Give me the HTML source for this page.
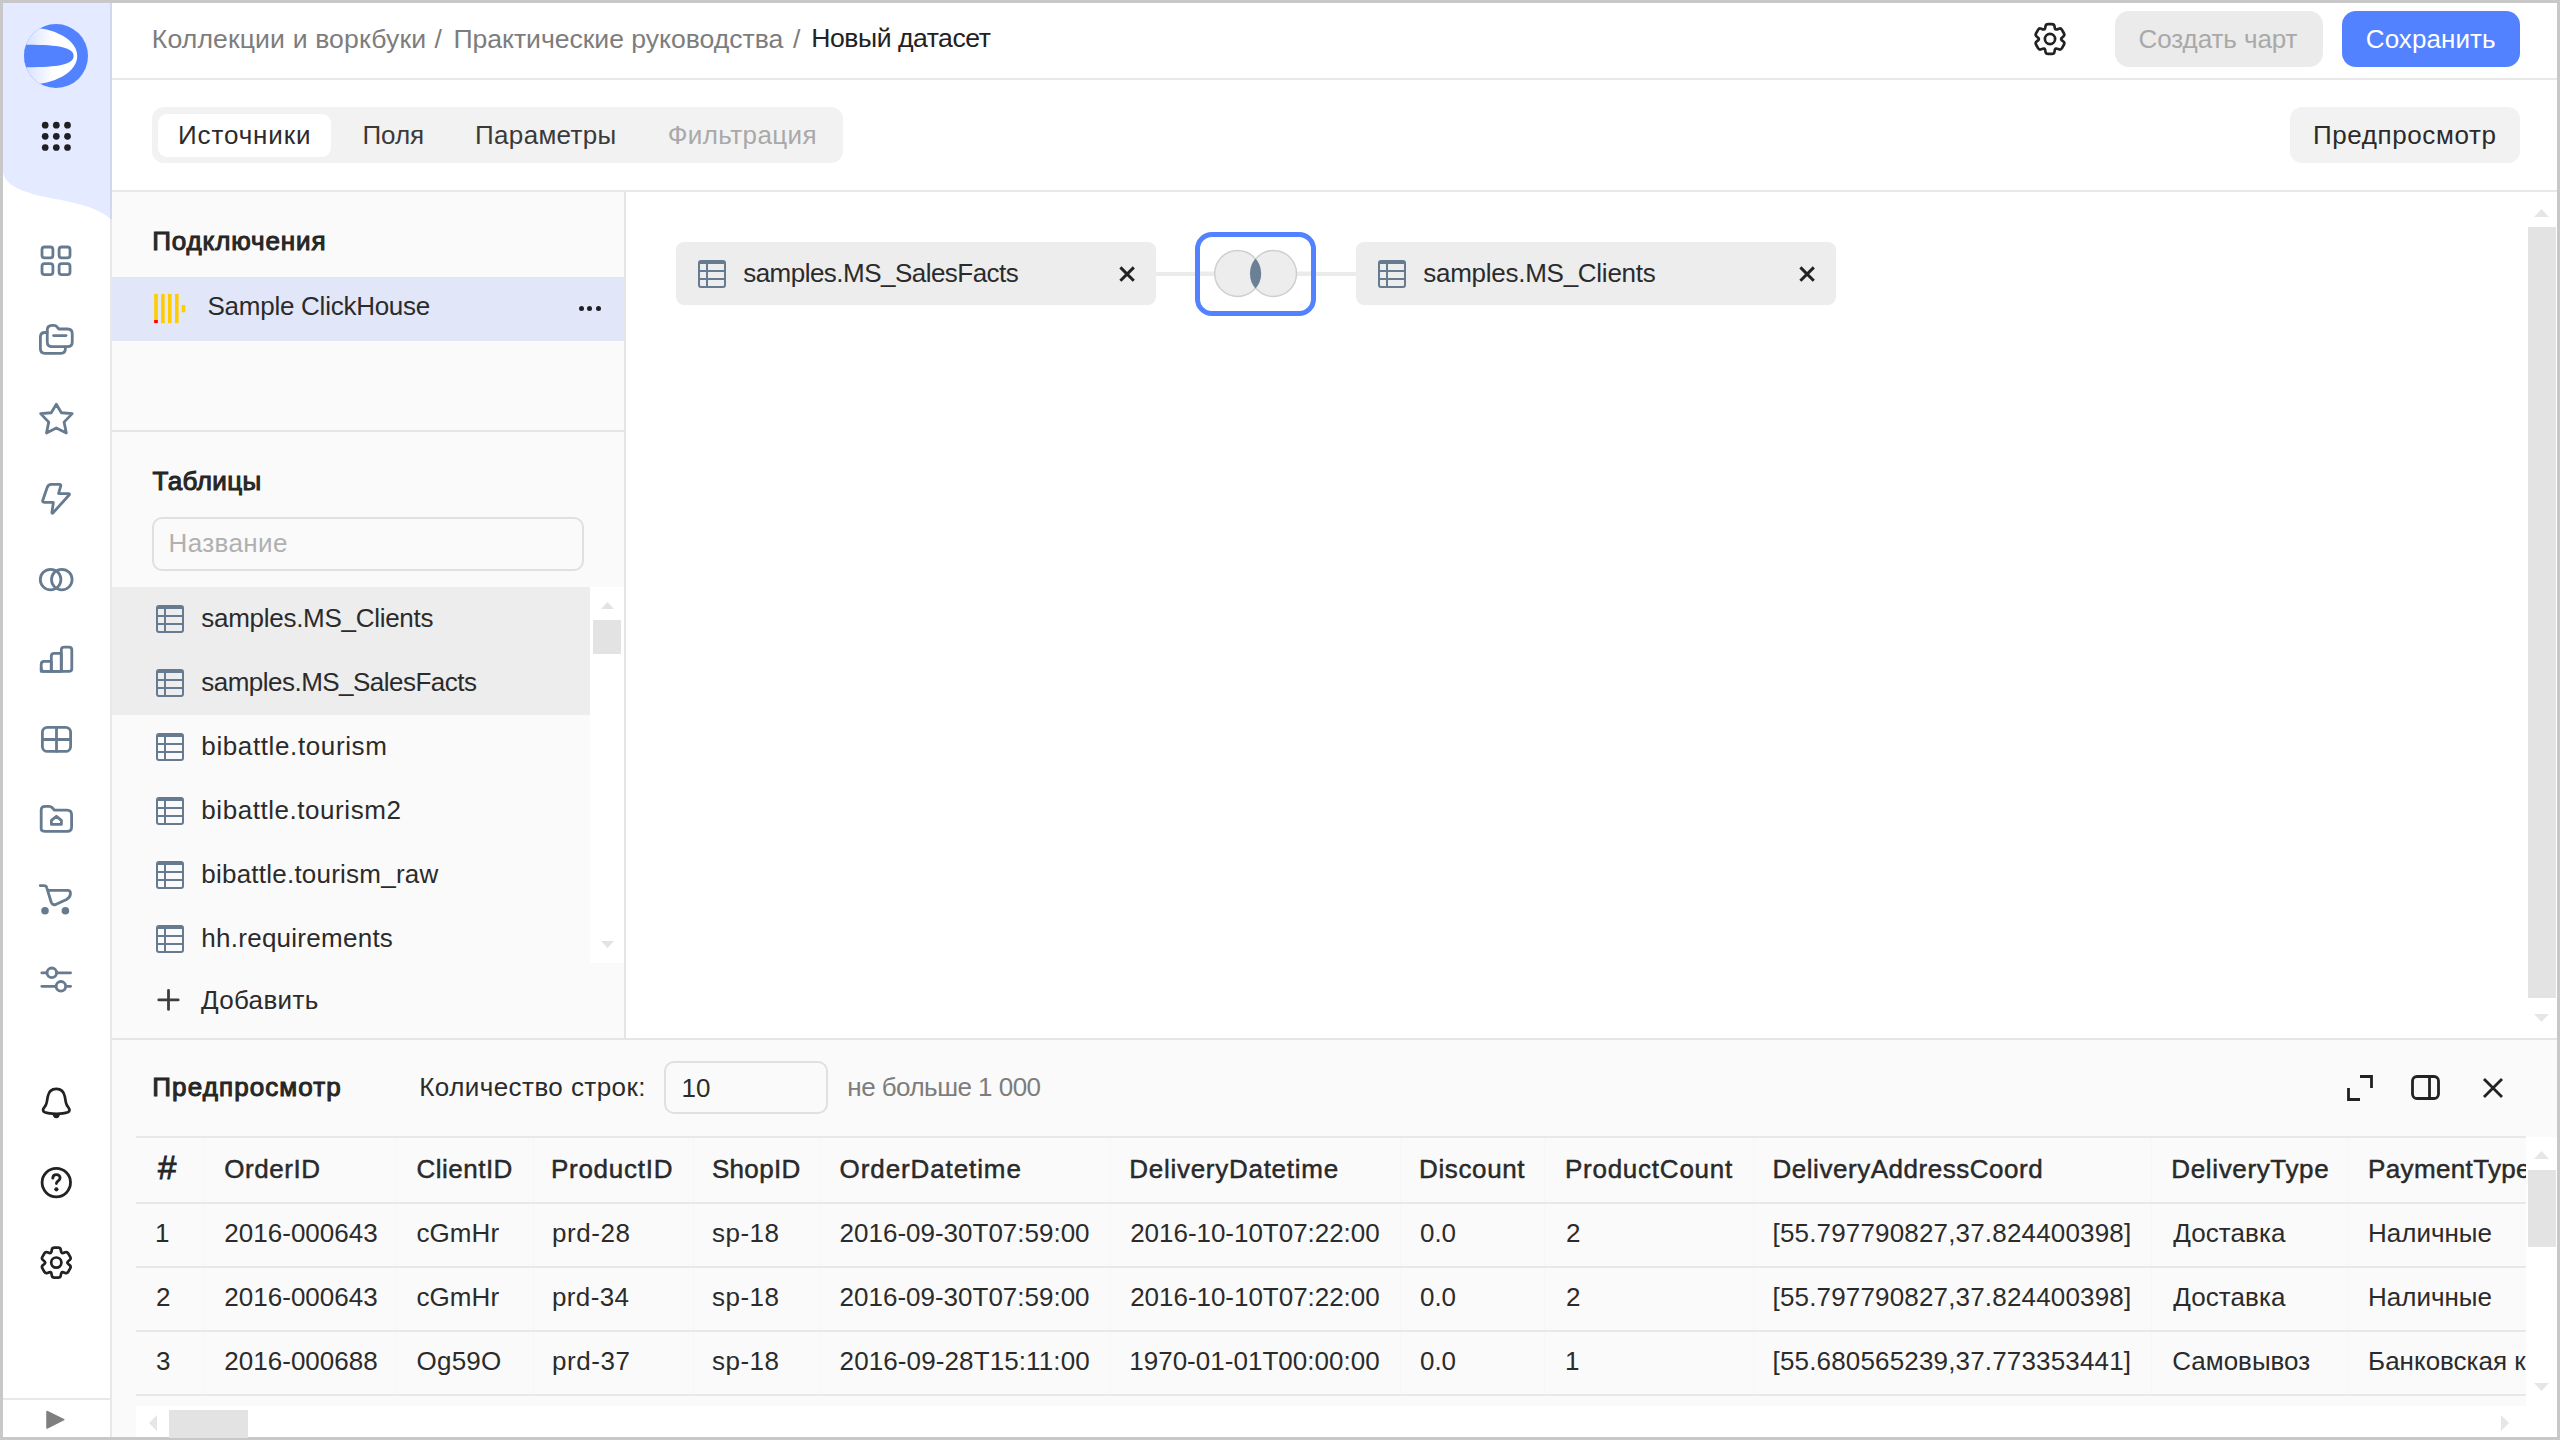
<!DOCTYPE html>
<html><head><meta charset="utf-8">
<style>
*{box-sizing:border-box;margin:0;padding:0}
html,body{width:2560px;height:1440px;overflow:hidden;background:#c8c8c8}
body{font-family:"Liberation Sans",sans-serif;color:#222;position:relative}
.a{position:absolute}
.t{position:absolute;white-space:nowrap;font-size:26px;line-height:30px}
</style></head><body>

<div class="a" style="left:3px;top:3px;width:2554px;height:1434px;background:#fff;"></div>
<svg class="a" style="left:0;top:0" width="112" height="1440" viewBox="0 0 112 1440"><path d="M3 3H111V219C96 207 78 203 50 198C20 192 3 184 3 170Z" fill="#e4eaff"/><rect x="110" y="3" width="2" height="216" fill="#d0d7ee"/><rect x="110" y="219" width="2" height="1218" fill="#e8e8e8"/><rect x="3" y="1398" width="107" height="2" fill="#e8e8e8"/><defs>
<clipPath id="lc"><circle cx="56" cy="56" r="32"/></clipPath>
<linearGradient id="lg" gradientUnits="userSpaceOnUse" x1="24" y1="0" x2="54" y2="0"><stop offset="0" stop-color="#d6dfff"/><stop offset="1" stop-color="#ffffff"/></linearGradient>
</defs>
<g clip-path="url(#lc)">
<rect x="20" y="20" width="72" height="72" fill="#5282ff"/>
<ellipse cx="28" cy="56" rx="49.2" ry="28.6" fill="url(#lg)"/>
<path d="M18 44.9C56 44.3 73.6 46.8 73.6 56C73.6 65.2 56 67.7 18 67.2Z" fill="#5282ff"/>
</g><circle cx="45.2" cy="125.2" r="3.35" fill="#1f2023"/><circle cx="56.3" cy="125.2" r="3.35" fill="#1f2023"/><circle cx="67.5" cy="125.2" r="3.35" fill="#1f2023"/><circle cx="45.2" cy="136.3" r="3.35" fill="#1f2023"/><circle cx="56.3" cy="136.3" r="3.35" fill="#1f2023"/><circle cx="67.5" cy="136.3" r="3.35" fill="#1f2023"/><circle cx="45.2" cy="147.5" r="3.35" fill="#1f2023"/><circle cx="56.3" cy="147.5" r="3.35" fill="#1f2023"/><circle cx="67.5" cy="147.5" r="3.35" fill="#1f2023"/><g fill="none" stroke="#667b8f" stroke-width="2.8" stroke-linejoin="round" stroke-linecap="round"><rect x="42" y="247" width="10.9" height="10.9" rx="2.6"/><rect x="59.1" y="247" width="10.9" height="10.9" rx="2.6"/><rect x="42" y="263.7" width="10.9" height="10.9" rx="2.6"/><rect x="59.1" y="263.7" width="10.9" height="10.9" rx="2.6"/></g><g fill="none" stroke="#667b8f" stroke-width="2.8" stroke-linejoin="round" stroke-linecap="round"><path d="M47.25 332.5H45Q40.4 332.5 40.4 337V348.8Q40.4 353.3 45 353.3H60.9Q65.4 353.3 65.4 348.8V347"/><path d="M47.25 341.8V330.3Q47.25 325.4 52 325.4H53.6Q55.9 325.4 57.3 327.2L58.9 329H67.5Q72.25 329 72.25 333.7V342Q72.25 346.7 67.5 346.7H52Q47.25 346.7 47.25 341.8Z"/><path d="M53.6 335.6H66"/></g><path fill="none" stroke="#667b8f" stroke-width="2.8" stroke-linejoin="round" stroke-linecap="round" d="M56.30 404.20L61.38 412.74L72.18 413.60L64.08 422.13L66.34 432.93L56.30 427.96L46.47 432.93L48.74 422.13L40.64 413.60L51.22 412.74Z"/><path fill="none" stroke="#667b8f" stroke-width="2.8" stroke-linejoin="round" stroke-linecap="round" d="M51.40 484.40L59.60 484.40Q61.20 484.40 60.75 485.94L58.58 493.31Q58.50 493.60 58.80 493.60L68.20 493.60Q70.40 493.60 68.92 495.23L53.34 512.47Q51.60 514.40 51.98 511.83L53.36 502.60Q53.40 502.30 53.10 502.30L44.30 502.30Q42.10 502.30 42.81 500.22L47.17 487.43Q48.20 484.40 51.40 484.40Z"/><g fill="none" stroke="#667b8f" stroke-width="2.8" stroke-linejoin="round" stroke-linecap="round"><circle cx="50.6" cy="579.6" r="10.3"/><circle cx="61.8" cy="579.6" r="10.3"/></g><g fill="none" stroke="#667b8f" stroke-width="2.8" stroke-linejoin="round" stroke-linecap="round"><path d="M41.2 671.4V664.4Q41.2 661.4 44.2 661.4H51.3V671.4Z"/><path d="M51.3 671.4V656.2Q51.3 653.4 54.3 653.4H61.3V671.4Z"/><path d="M61.3 671.4V650Q61.3 647.2 64.3 647.2H68.8Q71.8 647.2 71.8 650V668.4Q71.8 671.4 68.8 671.4H44.2Q41.2 671.4 41.2 668.4"/></g><g fill="none" stroke="#667b8f" stroke-width="2.8" stroke-linejoin="round" stroke-linecap="round"><rect x="42.4" y="727.4" width="28.2" height="24" rx="5"/><path d="M56.5 727.4V751.4M42.4 739.5H70.6"/></g><g fill="none" stroke="#667b8f" stroke-width="2.8" stroke-linejoin="round" stroke-linecap="round"><path d="M41.2 810V829Q41.2 831.4 45.5 831.4H67.2Q71.6 831.4 71.6 827V815Q71.6 810.2 67 810.2H54.5L52 807.5Q51 806.4 49 806.4H45.3Q41.2 806.4 41.2 810Z"/><path d="M56.4 816.3L51.4 820.4V824.4H61.4V820.4Z"/></g><g fill="none" stroke="#667b8f" stroke-width="2.8" stroke-linejoin="round" stroke-linecap="round"><path d="M40.2 885.6H44Q46.3 885.6 46.8 887.8L51.3 902.5Q52.5 905.3 55.7 904.6L66.5 899.4Q70.4 897.4 70.4 893.8V893Q70.4 890.3 67.6 890.3H47.9"/></g><circle cx="45" cy="910.7" r="3.8" fill="#667b8f"/><circle cx="65.4" cy="910.7" r="3.8" fill="#667b8f"/><g fill="none" stroke="#667b8f" stroke-width="2.8" stroke-linejoin="round" stroke-linecap="round"><path d="M41.8 972.8H47M56.8 972.8H70.6M41.8 986.3H56M65.8 986.3H70.6"/><circle cx="51.8" cy="972.8" r="4.8"/><circle cx="60.9" cy="986.3" r="4.8"/></g><g fill="none" stroke="#222" stroke-width="2.7" stroke-linejoin="round"><path d="M56.3 1088.8C51 1088.8 48.5 1092.5 47.8 1096.5L46.7 1102.5C46.3 1104.6 45.5 1106 44.3 1107.4C42.6 1109.3 42.5 1111.2 44.8 1112.3C47.5 1113.3 51.8 1113.8 56.3 1113.8C60.8 1113.8 65.1 1113.3 67.8 1112.3C70.1 1111.2 70 1109.3 68.3 1107.4C67.1 1106 66.3 1104.6 65.9 1102.5L64.8 1096.5C64.1 1092.5 61.6 1088.8 56.3 1088.8Z"/></g><path d="M52.5 1114.5H60.1L59 1117Q58 1118.3 56.3 1118.3Q54.6 1118.3 53.6 1117Z" fill="#222"/><g fill="none" stroke="#222" stroke-width="2.8" stroke-linecap="round"><circle cx="56.3" cy="1182.6" r="14.2"/><path d="M52.8 1178.2C52.8 1176 54.4 1174.6 56.4 1174.6C58.5 1174.6 60.1 1176 60.1 1178C60.1 1179.6 59 1180.3 57.8 1181.2C56.9 1181.9 56.4 1182.5 56.4 1183.6"/></g><circle cx="56.4" cy="1189.3" r="2.1" fill="#222"/><path fill="none" stroke="#222" stroke-width="2.7" stroke-linejoin="round" d="M54.37 1247.66L58.23 1247.66Q60.43 1247.66 60.77 1249.74L60.77 1249.74Q61.11 1251.83 61.43 1252.49L61.43 1252.49Q61.75 1253.16 62.49 1253.10L62.49 1253.10Q63.23 1253.05 65.20 1252.30L65.20 1252.30Q67.17 1251.55 68.27 1253.46L70.20 1256.81Q71.30 1258.71 69.67 1260.05L69.67 1260.05Q68.04 1261.38 67.62 1261.99L67.62 1261.99Q67.20 1262.60 67.62 1263.21L67.62 1263.21Q68.04 1263.82 69.67 1265.15L69.67 1265.15Q71.30 1266.49 70.20 1268.39L68.27 1271.74Q67.17 1273.65 65.20 1272.90L65.20 1272.90Q63.23 1272.15 62.49 1272.10L62.49 1272.10Q61.75 1272.04 61.43 1272.71L61.43 1272.71Q61.11 1273.37 60.77 1275.46L60.77 1275.46Q60.43 1277.54 58.23 1277.54L54.37 1277.54Q52.17 1277.54 51.83 1275.46L51.83 1275.46Q51.49 1273.37 51.17 1272.71L51.17 1272.71Q50.85 1272.04 50.11 1272.10L50.11 1272.10Q49.37 1272.15 47.40 1272.90L47.40 1272.90Q45.43 1273.65 44.33 1271.74L42.40 1268.39Q41.30 1266.49 42.93 1265.15L42.93 1265.15Q44.56 1263.82 44.98 1263.21L44.98 1263.21Q45.40 1262.60 44.98 1261.99L44.98 1261.99Q44.56 1261.38 42.93 1260.05L42.93 1260.05Q41.30 1258.71 42.40 1256.81L44.33 1253.46Q45.43 1251.55 47.40 1252.30L47.40 1252.30Q49.37 1253.05 50.11 1253.10L50.11 1253.10Q50.85 1253.16 51.17 1252.49L51.17 1252.49Q51.49 1251.83 51.83 1249.74L51.83 1249.74Q52.17 1247.66 54.37 1247.66Z"/><circle cx="56.3" cy="1262.6" r="5.1" fill="none" stroke="#222" stroke-width="2.7"/><path d="M47 1411.5L63.8 1419.6L47 1428Z" fill="#7f7f7f" stroke="#7f7f7f" stroke-width="1.5" stroke-linejoin="round"/></svg>
<div class="a" style="left:112px;top:78px;width:2445px;height:2px;background:#e8e8e8;"></div>
<div class="t" style="left:151.75px;top:23.50px;font-size:26.6px;color:#7d7d7d;font-weight:normal;letter-spacing:0.139px;">Коллекции и воркбуки</div>
<div class="t" style="left:434.40px;top:23.50px;font-size:26.6px;color:#7d7d7d;font-weight:normal;letter-spacing:0.000px;">/</div>
<div class="t" style="left:453.40px;top:23.50px;font-size:26.6px;color:#7d7d7d;font-weight:normal;letter-spacing:-0.026px;">Практические руководства</div>
<div class="t" style="left:793.10px;top:23.50px;font-size:26.6px;color:#7d7d7d;font-weight:normal;letter-spacing:0.000px;">/</div>
<div class="t" style="left:811.30px;top:22.60px;font-size:26.6px;color:#222;font-weight:normal;letter-spacing:-0.475px;">Новый датасет</div>
<svg class="a" style="left:2030px;top:19px" width="40" height="40" viewBox="2030 19 40 40"><path fill="none" stroke="#222" stroke-width="2.7" stroke-linejoin="round" d="M2048.07 24.06L2051.93 24.06Q2054.13 24.06 2054.47 26.14L2054.47 26.14Q2054.81 28.23 2055.13 28.89L2055.13 28.89Q2055.45 29.56 2056.19 29.50L2056.19 29.50Q2056.93 29.45 2058.90 28.70L2058.90 28.70Q2060.87 27.95 2061.97 29.86L2063.90 33.21Q2065.00 35.11 2063.37 36.45L2063.37 36.45Q2061.74 37.78 2061.32 38.39L2061.32 38.39Q2060.90 39.00 2061.32 39.61L2061.32 39.61Q2061.74 40.22 2063.37 41.55L2063.37 41.55Q2065.00 42.89 2063.90 44.79L2061.97 48.14Q2060.87 50.05 2058.90 49.30L2058.90 49.30Q2056.93 48.55 2056.19 48.50L2056.19 48.50Q2055.45 48.44 2055.13 49.11L2055.13 49.11Q2054.81 49.77 2054.47 51.86L2054.47 51.86Q2054.13 53.94 2051.93 53.94L2048.07 53.94Q2045.87 53.94 2045.53 51.86L2045.53 51.86Q2045.19 49.77 2044.87 49.11L2044.87 49.11Q2044.55 48.44 2043.81 48.50L2043.81 48.50Q2043.07 48.55 2041.10 49.30L2041.10 49.30Q2039.13 50.05 2038.03 48.14L2036.10 44.79Q2035.00 42.89 2036.63 41.55L2036.63 41.55Q2038.26 40.22 2038.68 39.61L2038.68 39.61Q2039.10 39.00 2038.68 38.39L2038.68 38.39Q2038.26 37.78 2036.63 36.45L2036.63 36.45Q2035.00 35.11 2036.10 33.21L2038.03 29.86Q2039.13 27.95 2041.10 28.70L2041.10 28.70Q2043.07 29.45 2043.81 29.50L2043.81 29.50Q2044.55 29.56 2044.87 28.89L2044.87 28.89Q2045.19 28.23 2045.53 26.14L2045.53 26.14Q2045.87 24.06 2048.07 24.06Z"/><circle cx="2050" cy="39" r="5.1" fill="none" stroke="#222" stroke-width="2.7"/></svg>
<div class="a" style="left:2115px;top:11px;width:208px;height:56px;background:#ebebeb;border-radius:14px"></div>
<div class="t" style="left:2138.50px;top:24.20px;font-size:26px;color:#a9a9a9;font-weight:normal;letter-spacing:-0.073px;">Создать чарт</div>
<div class="a" style="left:2342px;top:11px;width:178px;height:56px;background:#5282ff;border-radius:14px"></div>
<div class="t" style="left:2365.80px;top:24.20px;font-size:26px;color:#fff;font-weight:normal;letter-spacing:0.062px;">Сохранить</div>
<div class="a" style="left:112px;top:190px;width:2445px;height:2px;background:#e8e8e8;"></div>
<div class="a" style="left:152px;top:107px;width:691px;height:56px;background:#f2f2f2;border-radius:12px"></div>
<div class="a" style="left:158px;top:114px;width:173px;height:43px;background:#fff;border-radius:9px"></div>
<div class="t" style="left:178.00px;top:120.30px;font-size:26px;color:#2b2b2b;font-weight:normal;letter-spacing:0.875px;">Источники</div>
<div class="t" style="left:362.40px;top:120.30px;font-size:26px;color:#3a3a3a;font-weight:normal;letter-spacing:-0.033px;">Поля</div>
<div class="t" style="left:475.10px;top:120.30px;font-size:26px;color:#3a3a3a;font-weight:normal;letter-spacing:0.312px;">Параметры</div>
<div class="t" style="left:667.70px;top:120.30px;font-size:26px;color:#a9a9a9;font-weight:normal;letter-spacing:0.400px;">Фильтрация</div>
<div class="a" style="left:2290px;top:107px;width:230px;height:56px;background:#f2f2f2;border-radius:12px"></div>
<div class="t" style="left:2313.00px;top:120.40px;font-size:26px;color:#2b2b2b;font-weight:normal;letter-spacing:0.591px;">Предпросмотр</div>
<div class="a" style="left:112px;top:192px;width:512px;height:847px;background:#fafafa;"></div>
<div class="a" style="left:624px;top:192px;width:2px;height:847px;background:#e5e5e5;"></div>
<div class="t" style="left:152.20px;top:225.80px;font-size:26px;color:#2b2b2b;font-weight:normal;letter-spacing:0.890px;-webkit-text-stroke:1px #222;">Подключения</div>
<div class="a" style="left:112px;top:277px;width:512px;height:64px;background:#e1e7f9;"></div>
<svg class="a" style="left:150px;top:290px" width="40" height="40" viewBox="150 290 40 40"><rect x="154.2" y="293.9" width="3.6" height="29.2" fill="#fc0"/><rect x="161.1" y="293.9" width="3.6" height="29.2" fill="#fc0"/><rect x="168" y="293.9" width="3.6" height="29.2" fill="#fc0"/><rect x="175" y="293.9" width="3.6" height="29.2" fill="#fc0"/><rect x="181.7" y="305" width="3.6" height="7.3" fill="#fc0"/><rect x="154.2" y="320" width="3.6" height="3.1" fill="#f00"/></svg>
<div class="t" style="left:207.50px;top:291.00px;font-size:26px;color:#2b2b2b;font-weight:normal;letter-spacing:-0.256px;">Sample ClickHouse</div>
<div class="a" style="left:578.6px;top:306.2px;width:5.2px;height:5.2px;background:#1f2023;border-radius:50%"></div>
<div class="a" style="left:587.3px;top:306.2px;width:5.2px;height:5.2px;background:#1f2023;border-radius:50%"></div>
<div class="a" style="left:596.0px;top:306.2px;width:5.2px;height:5.2px;background:#1f2023;border-radius:50%"></div>
<div class="a" style="left:112px;top:430px;width:512px;height:2px;background:#e5e5e5;"></div>
<div class="t" style="left:152.50px;top:466.00px;font-size:26px;color:#2b2b2b;font-weight:normal;letter-spacing:0.417px;-webkit-text-stroke:1px #222;">Таблицы</div>
<div class="a" style="left:152px;top:517px;width:432px;height:54px;background:#fafafa;border:2px solid #e0e0e0;border-radius:10px"></div>
<div class="t" style="left:168.60px;top:527.90px;font-size:26px;color:#b0b0b0;font-weight:normal;letter-spacing:0.379px;">Название</div>
<div class="a" style="left:112px;top:587px;width:478px;height:128px;background:#ededed;"></div>
<div class="a" style="left:590px;top:587px;width:34px;height:376px;background:#fff;"></div>
<div class="a" style="left:593px;top:620px;width:28px;height:34px;background:#e3e3e3;"></div>
<svg class="a" style="left:598px;top:598px" width="20" height="14"><path d="M3 11L9.5 4L16 11Z" fill="#e3e3e3"/></svg>
<svg class="a" style="left:598px;top:938px" width="20" height="14"><path d="M3 3L9.5 10L16 3Z" fill="#e3e3e3"/></svg>
<svg class="a" style="left:156px;top:605px" width="28" height="28" viewBox="0 0 28 28"><rect x="1" y="1" width="26" height="26" rx="2" fill="none" stroke="#667b8f" stroke-width="2"/><rect x="1" y="1" width="26" height="3" fill="#667b8f"/><path d="M2 11H26M2 19H26M9 3V27" stroke="#667b8f" stroke-width="2"/></svg>
<div class="t" style="left:201.30px;top:603.30px;font-size:26px;color:#2b2b2b;font-weight:normal;letter-spacing:-0.282px;">samples.MS_Clients</div>
<svg class="a" style="left:156px;top:669px" width="28" height="28" viewBox="0 0 28 28"><rect x="1" y="1" width="26" height="26" rx="2" fill="none" stroke="#667b8f" stroke-width="2"/><rect x="1" y="1" width="26" height="3" fill="#667b8f"/><path d="M2 11H26M2 19H26M9 3V27" stroke="#667b8f" stroke-width="2"/></svg>
<div class="t" style="left:201.30px;top:667.30px;font-size:26px;color:#2b2b2b;font-weight:normal;letter-spacing:-0.525px;">samples.MS_SalesFacts</div>
<svg class="a" style="left:156px;top:733px" width="28" height="28" viewBox="0 0 28 28"><rect x="1" y="1" width="26" height="26" rx="2" fill="none" stroke="#667b8f" stroke-width="2"/><rect x="1" y="1" width="26" height="3" fill="#667b8f"/><path d="M2 11H26M2 19H26M9 3V27" stroke="#667b8f" stroke-width="2"/></svg>
<div class="t" style="left:201.30px;top:731.30px;font-size:26px;color:#2b2b2b;font-weight:normal;letter-spacing:0.620px;">bibattle.tourism</div>
<svg class="a" style="left:156px;top:797px" width="28" height="28" viewBox="0 0 28 28"><rect x="1" y="1" width="26" height="26" rx="2" fill="none" stroke="#667b8f" stroke-width="2"/><rect x="1" y="1" width="26" height="3" fill="#667b8f"/><path d="M2 11H26M2 19H26M9 3V27" stroke="#667b8f" stroke-width="2"/></svg>
<div class="t" style="left:201.30px;top:795.30px;font-size:26px;color:#2b2b2b;font-weight:normal;letter-spacing:0.550px;">bibattle.tourism2</div>
<svg class="a" style="left:156px;top:861px" width="28" height="28" viewBox="0 0 28 28"><rect x="1" y="1" width="26" height="26" rx="2" fill="none" stroke="#667b8f" stroke-width="2"/><rect x="1" y="1" width="26" height="3" fill="#667b8f"/><path d="M2 11H26M2 19H26M9 3V27" stroke="#667b8f" stroke-width="2"/></svg>
<div class="t" style="left:201.30px;top:859.30px;font-size:26px;color:#2b2b2b;font-weight:normal;letter-spacing:0.226px;">bibattle.tourism_raw</div>
<svg class="a" style="left:156px;top:925px" width="28" height="28" viewBox="0 0 28 28"><rect x="1" y="1" width="26" height="26" rx="2" fill="none" stroke="#667b8f" stroke-width="2"/><rect x="1" y="1" width="26" height="3" fill="#667b8f"/><path d="M2 11H26M2 19H26M9 3V27" stroke="#667b8f" stroke-width="2"/></svg>
<div class="t" style="left:201.30px;top:923.30px;font-size:26px;color:#2b2b2b;font-weight:normal;letter-spacing:0.264px;">hh.requirements</div>
<svg class="a" style="left:155px;top:987px" width="26" height="26"><path d="M13.5 3.4V22.4M3.8 12.9H23.2" stroke="#3d3d3d" stroke-width="2.8" stroke-linecap="round"/></svg>
<div class="t" style="left:200.90px;top:985.00px;font-size:26px;color:#2b2b2b;font-weight:normal;letter-spacing:0.343px;">Добавить</div>
<div class="a" style="left:2528px;top:227px;width:28px;height:771px;background:#e3e3e3;"></div>
<svg class="a" style="left:2530px;top:204px" width="24" height="16"><path d="M4 13L11.5 5L19 13Z" fill="#e6e6e6"/></svg>
<svg class="a" style="left:2530px;top:1011px" width="24" height="16"><path d="M4 3L11.5 11L19 3Z" fill="#e6e6e6"/></svg>
<div class="a" style="left:1156px;top:271.5px;width:200px;height:4px;background:#ebebeb;"></div>
<div class="a" style="left:676px;top:242px;width:480px;height:63px;background:#ededed;border-radius:8px"></div>
<svg class="a" style="left:698px;top:259.5px" width="28" height="28" viewBox="0 0 28 28"><rect x="1" y="1" width="26" height="26" rx="2" fill="none" stroke="#667b8f" stroke-width="2"/><rect x="1" y="1" width="26" height="3" fill="#667b8f"/><path d="M2 11H26M2 19H26M9 3V27" stroke="#667b8f" stroke-width="2"/></svg>
<div class="t" style="left:743.20px;top:257.90px;font-size:26px;color:#2b2b2b;font-weight:normal;letter-spacing:-0.525px;">samples.MS_SalesFacts</div>
<svg class="a" style="left:1117.3px;top:264px" width="20" height="20"><path d="M3.4 3.4L16.8 16.8M16.8 3.4L3.4 16.8" stroke="#222" stroke-width="3"/></svg>
<div class="a" style="left:1356px;top:242px;width:480px;height:63px;background:#ededed;border-radius:8px"></div>
<svg class="a" style="left:1378px;top:259.5px" width="28" height="28" viewBox="0 0 28 28"><rect x="1" y="1" width="26" height="26" rx="2" fill="none" stroke="#667b8f" stroke-width="2"/><rect x="1" y="1" width="26" height="3" fill="#667b8f"/><path d="M2 11H26M2 19H26M9 3V27" stroke="#667b8f" stroke-width="2"/></svg>
<div class="t" style="left:1423.20px;top:257.90px;font-size:26px;color:#2b2b2b;font-weight:normal;letter-spacing:-0.259px;">samples.MS_Clients</div>
<svg class="a" style="left:1797px;top:264px" width="20" height="20"><path d="M3.4 3.4L16.8 16.8M16.8 3.4L3.4 16.8" stroke="#222" stroke-width="3"/></svg>
<div class="a" style="left:1195px;top:232px;width:121px;height:84px;background:transparent;border:5px solid #5282ff;border-radius:17px"></div>
<svg class="a" style="left:1200px;top:237px" width="111" height="74" viewBox="1200 237 111 74"><rect x="1200" y="271.5" width="111" height="4" fill="#ebebeb"/><circle cx="1237.7" cy="273.5" r="23" fill="#ededed" stroke="#cfcfcf" stroke-width="1.5"/><circle cx="1273.5" cy="273.5" r="23" fill="#ededed" stroke="#cfcfcf" stroke-width="1.5"/><path d="M1255.6 258.5A23 23 0 0 1 1255.6 288.5A23 23 0 0 1 1255.6 258.5Z" fill="#6b8096"/></svg>
<div class="a" style="left:112px;top:1039px;width:2445px;height:398px;background:#fafafa;"></div>
<div class="a" style="left:112px;top:1038px;width:2445px;height:2px;background:#e5e5e5;"></div>
<div class="t" style="left:152.30px;top:1072.30px;font-size:26px;color:#2b2b2b;font-weight:normal;letter-spacing:1.109px;-webkit-text-stroke:1px #222;">Предпросмотр</div>
<div class="t" style="left:419.30px;top:1072.30px;font-size:26px;color:#2b2b2b;font-weight:normal;letter-spacing:0.431px;">Количество строк:</div>
<div class="a" style="left:664px;top:1061px;width:164px;height:53px;background:#fafafa;border:2px solid #e0e0e0;border-radius:10px"></div>
<div class="t" style="left:681.60px;top:1073.00px;font-size:26px;color:#2b2b2b;font-weight:normal;letter-spacing:0.000px;">10</div>
<div class="t" style="left:847.30px;top:1072.30px;font-size:26px;color:#7d7d7d;font-weight:normal;letter-spacing:-0.529px;">не больше 1 000</div>
<svg class="a" style="left:2340px;top:1068px" width="40" height="40" viewBox="2340 1068 40 40"><path d="M2360 1076.5H2371.5V1088M2348.5 1088V1099.5H2360" fill="none" stroke="#222" stroke-width="2.8"/></svg>
<svg class="a" style="left:2405px;top:1068px" width="40" height="40" viewBox="2405 1068 40 40"><rect x="2412.5" y="1076.5" width="26" height="22" rx="4.5" fill="none" stroke="#222" stroke-width="2.8"/><path d="M2429.5 1077V1098" stroke="#222" stroke-width="2.8"/></svg>
<svg class="a" style="left:2473px;top:1068px" width="40" height="40" viewBox="2473 1068 40 40"><path d="M2484 1079L2502 1097M2502 1079L2484 1097" stroke="#222" stroke-width="2.8"/></svg>
<div class="a" style="left:204px;top:1137px;width:1px;height:257px;background:#f7f7f7;"></div>
<div class="a" style="left:396px;top:1137px;width:1px;height:257px;background:#f7f7f7;"></div>
<div class="a" style="left:533px;top:1137px;width:1px;height:257px;background:#f7f7f7;"></div>
<div class="a" style="left:692.5px;top:1137px;width:1px;height:257px;background:#f7f7f7;"></div>
<div class="a" style="left:820px;top:1137px;width:1px;height:257px;background:#f7f7f7;"></div>
<div class="a" style="left:1110px;top:1137px;width:1px;height:257px;background:#f7f7f7;"></div>
<div class="a" style="left:1400px;top:1137px;width:1px;height:257px;background:#f7f7f7;"></div>
<div class="a" style="left:1544px;top:1137px;width:1px;height:257px;background:#f7f7f7;"></div>
<div class="a" style="left:1753px;top:1137px;width:1px;height:257px;background:#f7f7f7;"></div>
<div class="a" style="left:2151px;top:1137px;width:1px;height:257px;background:#f7f7f7;"></div>
<div class="a" style="left:2348px;top:1137px;width:1px;height:257px;background:#f7f7f7;"></div>
<div class="a" style="left:136px;top:1136px;width:2390px;height:2px;background:#e8e8e8;"></div>
<div class="a" style="left:136px;top:1202px;width:2390px;height:2px;background:#e8e8e8;"></div>
<div class="a" style="left:136px;top:1266px;width:2390px;height:2px;background:#e8e8e8;"></div>
<div class="a" style="left:136px;top:1330px;width:2390px;height:2px;background:#e8e8e8;"></div>
<div class="a" style="left:136px;top:1394px;width:2390px;height:2px;background:#e8e8e8;"></div>
<div class="a" style="left:136px;top:1137px;width:2390px;height:260px;overflow:hidden">
<div class="t" style="left:22.00px;top:16.20px;font-size:33px;color:#2b2b2b;font-weight:normal;letter-spacing:0.000px;-webkit-text-stroke:0.9px #222;">#</div>
<div class="t" style="left:88.30px;top:17.00px;font-size:26px;color:#2b2b2b;font-weight:normal;letter-spacing:0.550px;-webkit-text-stroke:0.45px #222;">OrderID</div>
<div class="t" style="left:280.50px;top:17.00px;font-size:26px;color:#2b2b2b;font-weight:normal;letter-spacing:0.486px;-webkit-text-stroke:0.45px #222;">ClientID</div>
<div class="t" style="left:414.90px;top:17.00px;font-size:26px;color:#2b2b2b;font-weight:normal;letter-spacing:0.750px;-webkit-text-stroke:0.45px #222;">ProductID</div>
<div class="t" style="left:575.90px;top:17.00px;font-size:26px;color:#2b2b2b;font-weight:normal;letter-spacing:0.340px;-webkit-text-stroke:0.45px #222;">ShopID</div>
<div class="t" style="left:703.60px;top:17.00px;font-size:26px;color:#2b2b2b;font-weight:normal;letter-spacing:0.900px;-webkit-text-stroke:0.45px #222;">OrderDatetime</div>
<div class="t" style="left:993.20px;top:17.00px;font-size:26px;color:#2b2b2b;font-weight:normal;letter-spacing:0.733px;-webkit-text-stroke:0.45px #222;">DeliveryDatetime</div>
<div class="t" style="left:1283.10px;top:17.00px;font-size:26px;color:#2b2b2b;font-weight:normal;letter-spacing:0.614px;-webkit-text-stroke:0.45px #222;">Discount</div>
<div class="t" style="left:1428.90px;top:17.00px;font-size:26px;color:#2b2b2b;font-weight:normal;letter-spacing:0.764px;-webkit-text-stroke:0.45px #222;">ProductCount</div>
<div class="t" style="left:1636.50px;top:17.00px;font-size:26px;color:#2b2b2b;font-weight:normal;letter-spacing:0.532px;-webkit-text-stroke:0.45px #222;">DeliveryAddressCoord</div>
<div class="t" style="left:2035.30px;top:17.00px;font-size:26px;color:#2b2b2b;font-weight:normal;letter-spacing:0.645px;-webkit-text-stroke:0.45px #222;">DeliveryType</div>
<div class="t" style="left:2232.10px;top:17.00px;font-size:26px;color:#2b2b2b;font-weight:normal;letter-spacing:0.350px;-webkit-text-stroke:0.45px #222;">PaymentType</div>
<div class="t" style="left:19.00px;top:81.00px;font-size:26px;color:#2b2b2b;font-weight:normal;letter-spacing:0.000px;">1</div>
<div class="t" style="left:88.30px;top:81.00px;font-size:26px;color:#2b2b2b;font-weight:normal;letter-spacing:0.020px;">2016-000643</div>
<div class="t" style="left:280.50px;top:81.00px;font-size:26px;color:#2b2b2b;font-weight:normal;letter-spacing:0.075px;">cGmHr</div>
<div class="t" style="left:415.90px;top:81.00px;font-size:26px;color:#2b2b2b;font-weight:normal;letter-spacing:0.600px;">prd-28</div>
<div class="t" style="left:575.90px;top:81.00px;font-size:26px;color:#2b2b2b;font-weight:normal;letter-spacing:0.525px;">sp-18</div>
<div class="t" style="left:703.60px;top:81.00px;font-size:26px;color:#2b2b2b;font-weight:normal;letter-spacing:-0.006px;">2016-09-30T07:59:00</div>
<div class="t" style="left:994.20px;top:81.00px;font-size:26px;color:#2b2b2b;font-weight:normal;letter-spacing:-0.033px;">2016-10-10T07:22:00</div>
<div class="t" style="left:1284.10px;top:81.00px;font-size:26px;color:#2b2b2b;font-weight:normal;letter-spacing:-0.150px;">0.0</div>
<div class="t" style="left:1429.90px;top:81.00px;font-size:26px;color:#2b2b2b;font-weight:normal;letter-spacing:0.000px;">2</div>
<div class="t" style="left:1636.50px;top:81.00px;font-size:26px;color:#2b2b2b;font-weight:normal;letter-spacing:0.169px;">[55.797790827,37.824400398]</div>
<div class="t" style="left:2037.30px;top:81.00px;font-size:26px;color:#2b2b2b;font-weight:normal;letter-spacing:0.071px;">Доставка</div>
<div class="t" style="left:2232.10px;top:81.00px;font-size:26px;color:#2b2b2b;font-weight:normal;letter-spacing:-0.014px;">Наличные</div>
<div class="t" style="left:20.00px;top:145.00px;font-size:26px;color:#2b2b2b;font-weight:normal;letter-spacing:0.000px;">2</div>
<div class="t" style="left:88.30px;top:145.00px;font-size:26px;color:#2b2b2b;font-weight:normal;letter-spacing:0.020px;">2016-000643</div>
<div class="t" style="left:280.50px;top:145.00px;font-size:26px;color:#2b2b2b;font-weight:normal;letter-spacing:0.075px;">cGmHr</div>
<div class="t" style="left:415.90px;top:145.00px;font-size:26px;color:#2b2b2b;font-weight:normal;letter-spacing:0.400px;">prd-34</div>
<div class="t" style="left:575.90px;top:145.00px;font-size:26px;color:#2b2b2b;font-weight:normal;letter-spacing:0.525px;">sp-18</div>
<div class="t" style="left:703.60px;top:145.00px;font-size:26px;color:#2b2b2b;font-weight:normal;letter-spacing:-0.006px;">2016-09-30T07:59:00</div>
<div class="t" style="left:994.20px;top:145.00px;font-size:26px;color:#2b2b2b;font-weight:normal;letter-spacing:-0.033px;">2016-10-10T07:22:00</div>
<div class="t" style="left:1284.10px;top:145.00px;font-size:26px;color:#2b2b2b;font-weight:normal;letter-spacing:-0.150px;">0.0</div>
<div class="t" style="left:1429.90px;top:145.00px;font-size:26px;color:#2b2b2b;font-weight:normal;letter-spacing:0.000px;">2</div>
<div class="t" style="left:1636.50px;top:145.00px;font-size:26px;color:#2b2b2b;font-weight:normal;letter-spacing:0.169px;">[55.797790827,37.824400398]</div>
<div class="t" style="left:2037.30px;top:145.00px;font-size:26px;color:#2b2b2b;font-weight:normal;letter-spacing:0.071px;">Доставка</div>
<div class="t" style="left:2232.10px;top:145.00px;font-size:26px;color:#2b2b2b;font-weight:normal;letter-spacing:-0.014px;">Наличные</div>
<div class="t" style="left:20.00px;top:209.00px;font-size:26px;color:#2b2b2b;font-weight:normal;letter-spacing:0.000px;">3</div>
<div class="t" style="left:88.30px;top:209.00px;font-size:26px;color:#2b2b2b;font-weight:normal;letter-spacing:0.020px;">2016-000688</div>
<div class="t" style="left:280.50px;top:209.00px;font-size:26px;color:#2b2b2b;font-weight:normal;letter-spacing:0.225px;">Og59O</div>
<div class="t" style="left:415.90px;top:209.00px;font-size:26px;color:#2b2b2b;font-weight:normal;letter-spacing:0.600px;">prd-37</div>
<div class="t" style="left:575.90px;top:209.00px;font-size:26px;color:#2b2b2b;font-weight:normal;letter-spacing:0.525px;">sp-18</div>
<div class="t" style="left:703.60px;top:209.00px;font-size:26px;color:#2b2b2b;font-weight:normal;letter-spacing:0.106px;">2016-09-28T15:11:00</div>
<div class="t" style="left:993.20px;top:209.00px;font-size:26px;color:#2b2b2b;font-weight:normal;letter-spacing:0.022px;">1970-01-01T00:00:00</div>
<div class="t" style="left:1284.10px;top:209.00px;font-size:26px;color:#2b2b2b;font-weight:normal;letter-spacing:-0.150px;">0.0</div>
<div class="t" style="left:1428.90px;top:209.00px;font-size:26px;color:#2b2b2b;font-weight:normal;letter-spacing:0.000px;">1</div>
<div class="t" style="left:1636.50px;top:209.00px;font-size:26px;color:#2b2b2b;font-weight:normal;letter-spacing:0.165px;">[55.680565239,37.773353441]</div>
<div class="t" style="left:2036.30px;top:209.00px;font-size:26px;color:#2b2b2b;font-weight:normal;letter-spacing:-0.012px;">Самовывоз</div>
<div class="t" style="left:2232.10px;top:209.00px;font-size:26px;color:#2b2b2b;font-weight:normal;letter-spacing:0.000px;">Банковская карта</div>
</div>
<div class="a" style="left:2526px;top:1137px;width:31px;height:270px;background:#fff;"></div>
<div class="a" style="left:2528px;top:1170px;width:28px;height:77px;background:#e3e3e3;"></div>
<svg class="a" style="left:2530px;top:1146px" width="24" height="16"><path d="M4 13L11.5 5L19 13Z" fill="#e6e6e6"/></svg>
<svg class="a" style="left:2530px;top:1380px" width="24" height="16"><path d="M4 3L11.5 11L19 3Z" fill="#e6e6e6"/></svg>
<div class="a" style="left:136px;top:1406px;width:2421px;height:31px;background:#fff;"></div>
<div class="a" style="left:169px;top:1409.5px;width:79px;height:28px;background:#e3e3e3;"></div>
<svg class="a" style="left:144px;top:1412px" width="16" height="22"><path d="M13 3L5 11L13 19Z" fill="#e6e6e6"/></svg>
<svg class="a" style="left:2498px;top:1412px" width="16" height="22"><path d="M3 3L11 11L3 19Z" fill="#e6e6e6"/></svg>
</body></html>
